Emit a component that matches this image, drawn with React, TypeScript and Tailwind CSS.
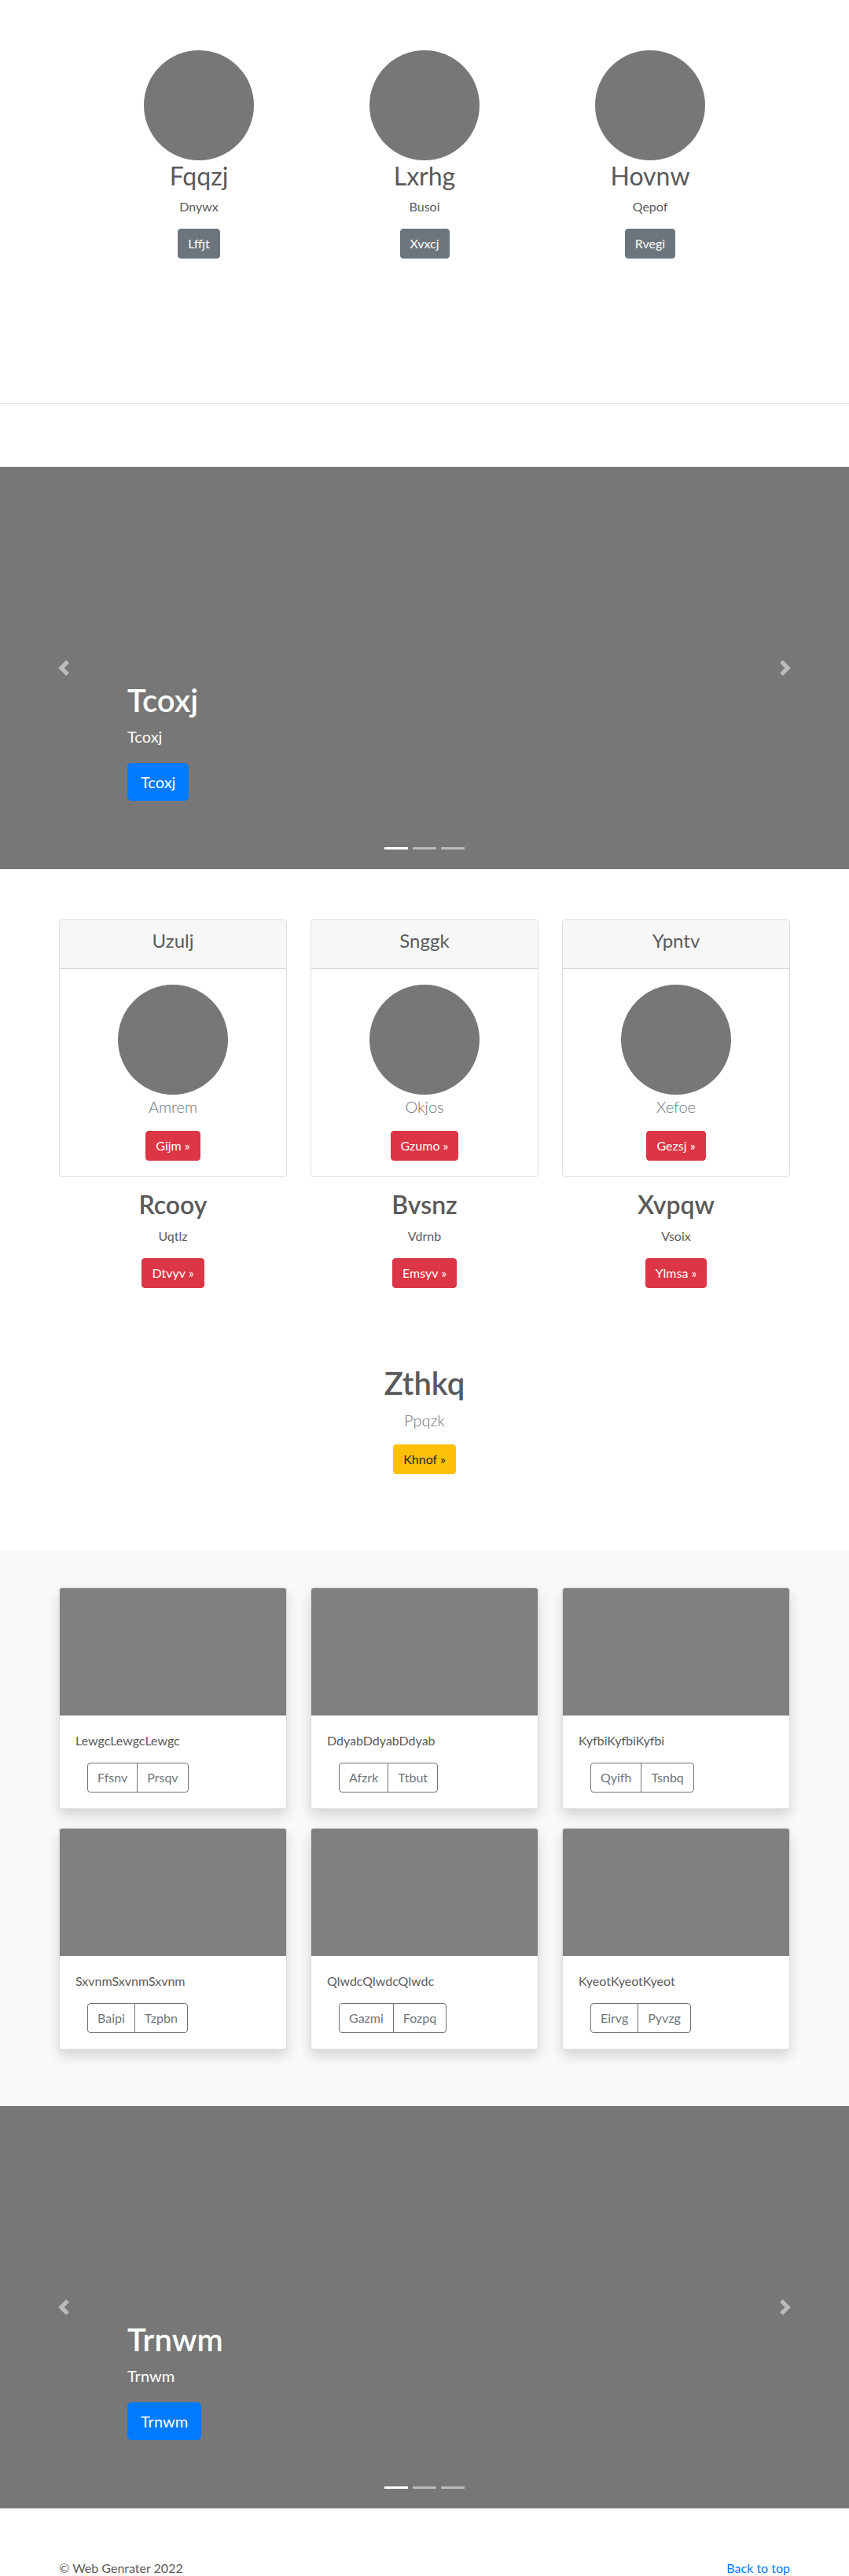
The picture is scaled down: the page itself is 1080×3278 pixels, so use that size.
import React from 'react';

const teamTop = [
  { name: 'Fqqzj', role: 'Dnywx', cta: 'Lffjt' },
  { name: 'Lxrhg', role: 'Busoi', cta: 'Xvxcj' },
  { name: 'Hovnw', role: 'Qepof', cta: 'Rvegi' },
];

const pricing = [
  { head: 'Uzulj', lead: 'Amrem', cta: 'Gijm' },
  { head: 'Snggk', lead: 'Okjos', cta: 'Gzumo' },
  { head: 'Ypntv', lead: 'Xefoe', cta: 'Gezsj' },
];

const features = [
  { title: 'Rcooy', text: 'Uqtlz', cta: 'Dtvyv' },
  { title: 'Bvsnz', text: 'Vdrnb', cta: 'Emsyv' },
  { title: 'Xvpqw', text: 'Vsoix', cta: 'Ylmsa' },
];

const album = [
  { text: 'LewgcLewgcLewgc', a: 'Ffsnv', b: 'Prsqv' },
  { text: 'DdyabDdyabDdyab', a: 'Afzrk', b: 'Ttbut' },
  { text: 'KyfbiKyfbiKyfbi', a: 'Qyifh', b: 'Tsnbq' },
  { text: 'SxvnmSxvnmSxvnm', a: 'Baipi', b: 'Tzpbn' },
  { text: 'QlwdcQlwdcQlwdc', a: 'Gazmi', b: 'Fozpq' },
  { text: 'KyeotKyeotKyeot', a: 'Eirvg', b: 'Pyvzg' },
];

function Chevron({ dir }: { dir: 'prev' | 'next' }) {
  return (
    <svg viewBox="0 0 8 8" className="h-5 w-5" fill="#fff">
      <path
        d={
          dir === 'prev'
            ? 'M5.25 0l-4 4 4 4 1.5-1.5L4.25 4l2.5-2.5L5.25 0z'
            : 'M2.75 0l-1.5 1.5L3.75 4l-2.5 2.5L2.75 8l4-4-4-4z'
        }
      />
    </svg>
  );
}

function Carousel({ title }: { title: string }) {
  return (
    <div className="relative h-[512px] bg-[#777777] mb-16 overflow-hidden">
      <div className="absolute inset-y-0 left-0 w-[15%] flex items-center justify-center opacity-50">
        <Chevron dir="prev" />
      </div>
      <div className="absolute inset-y-0 right-0 w-[15%] flex items-center justify-center opacity-50">
        <Chevron dir="next" />
      </div>

      {/* caption */}
      <div className="absolute left-[15%] right-[15%] bottom-12 pt-5 pb-5 text-white text-left">
        <h1 className="text-[40px] leading-[1.2] font-semibold mb-2">{title}</h1>
        <p className="text-[20px] leading-[1.4] mb-5">{title}</p>
        <div className="flex mb-[19px]">
          <a className="inline-block bg-[#007bff] border border-[#007bff] text-white text-[20px] leading-[1.5] px-4 py-2 rounded-[5px]">
            {title}
          </a>
        </div>
      </div>

      {/* indicators */}
      <div className="absolute left-0 right-0 bottom-[25px] flex justify-center gap-[6px]">
        <span className="w-[30px] h-[3px] bg-white" />
        <span className="w-[30px] h-[3px] bg-white opacity-50" />
        <span className="w-[30px] h-[3px] bg-white opacity-50" />
      </div>
    </div>
  );
}

export default function App() {
  return (
    <div className="bg-white text-[#5a5a5a] font-[Lato,'Open_Sans',sans-serif] text-base leading-6">
      {/* Team row */}
      <section className="pt-16">
        <div className="w-[861px] mx-auto grid grid-cols-3 text-center">
          {teamTop.map((t) => (
            <div key={t.name} className="flex flex-col items-center">
              <div className="w-[140px] h-[140px] rounded-full bg-[#777777]" />
              <h2 className="mt-px text-[32px] leading-[1.2] font-normal mb-2">{t.name}</h2>
              <p className="mb-4">{t.role}</p>
              <a className="inline-block bg-[#6c757d] text-white px-3 py-1.5 rounded border border-[#6c757d]">
                {t.cta}
              </a>
            </div>
          ))}
        </div>
      </section>

      <div className="mt-[184px] h-px bg-[#e5e5e5]" />

      <div className="mt-20">
        <Carousel title="Tcoxj" />
      </div>

      {/* Pricing cards */}
      <section className="w-[960px] mx-auto px-[15px]">
        <div className="grid grid-cols-3 gap-x-[30px]">
          {pricing.map((p) => (
            <div key={p.head} className="border border-[rgba(0,0,0,0.125)] rounded text-center">
              <div className="bg-[#f7f7f7] border-b border-[rgba(0,0,0,0.125)] px-5 py-3 rounded-t">
                <h4 className="text-[24px] leading-[1.2] font-normal mb-2">{p.head}</h4>
              </div>
              <div className="p-5 flex flex-col items-center">
                <div className="w-[140px] h-[140px] rounded-full bg-[#777777]" />
                <p className="text-[20px] leading-[1.5] font-light text-[#6c757d] mb-4">{p.lead}</p>
                <a className="inline-block bg-[#dc3545] border border-[#dc3545] text-white px-3 py-1.5 rounded">
                  {p.cta} &raquo;
                </a>
              </div>
            </div>
          ))}
        </div>

        <div className="grid grid-cols-3 gap-x-[30px] mt-4 text-center">
          {features.map((f) => (
            <div key={f.title} className="flex flex-col items-center">
              <h2 className="text-[32px] leading-[1.2] font-semibold mb-2">{f.title}</h2>
              <p className="mb-4">{f.text}</p>
              <a className="inline-block bg-[#dc3545] border border-[#dc3545] text-white px-3 py-1.5 rounded">
                {f.cta} &raquo;
              </a>
            </div>
          ))}
        </div>

        <div className="mt-[97px] flex flex-col items-center text-center">
          <h1 className="text-[40px] leading-[1.2] font-semibold mb-2">Zthkq</h1>
          <p className="text-[20px] leading-[1.5] font-light text-[#6c757d] mb-4">Ppqzk</p>
          <a className="inline-block bg-[#ffc107] border border-[#ffc107] text-[#212529] px-3 py-1.5 rounded">
            Khnof &raquo;
          </a>
        </div>
      </section>

      {/* Album */}
      <section className="mt-24 bg-[#f8f9fa] py-12">
        <div className="w-[960px] mx-auto px-[15px] grid grid-cols-3 gap-x-[30px]">
          {album.map((c) => (
            <div
              key={c.text}
              className="mb-6 bg-white border border-[rgba(0,0,0,0.125)] rounded overflow-hidden shadow-[0_8px_16px_rgba(0,0,0,0.15)]"
            >
              <div className="h-[162px] bg-[#808080]" />
              <div className="p-5">
                <p className="mb-4">{c.text}</p>
                <div className="flex ml-[15px]">
                  <a className="px-3 py-1.5 border border-[#6c757d] text-[#6c757d] rounded-l">{c.a}</a>
                  <a className="-ml-px px-3 py-1.5 border border-[#6c757d] text-[#6c757d] rounded-r">{c.b}</a>
                </div>
              </div>
            </div>
          ))}
        </div>
      </section>

      <Carousel title="Trnwm" />

      <footer className="w-[960px] mx-auto px-[15px] flex justify-between">
        <p className="mb-4">&copy; Web Genrater 2022</p>
        <p className="mb-4">
          <a className="text-[#007bff]">Back to top</a>
        </p>
      </footer>
    </div>
  );
}
